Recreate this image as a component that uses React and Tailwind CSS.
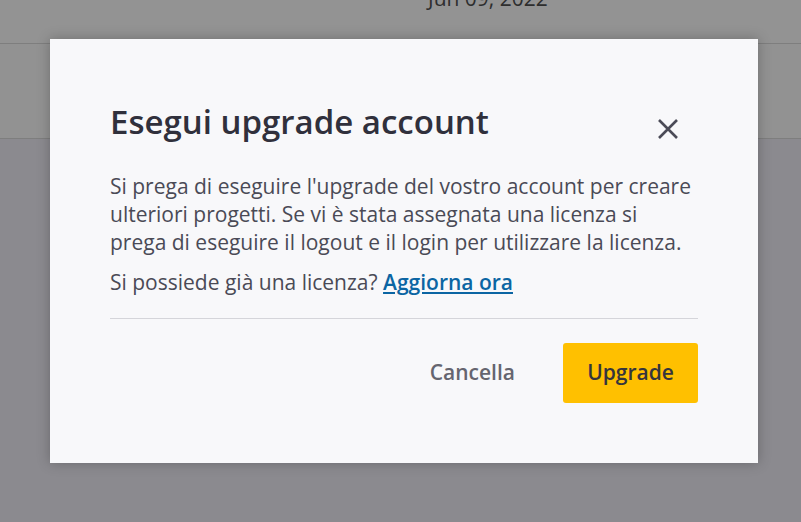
export default function App() {
  return (
    <div
      className="relative h-[522px] w-[801px] overflow-hidden bg-[#8b8a8f]"
      style={{ fontFamily: '"Open Sans", "Noto Sans", sans-serif' }}
    >
      {/* dimmed page behind the dialog */}
      <div className="h-[44px] overflow-hidden border-b border-[#7e7e7e] bg-[#939393]">
        <div className="-mt-[16px] pl-[428px] text-[21px] leading-[28px] text-[#2e2e2e]">Jun 09, 2022</div>
      </div>
      <div className="h-[95px] border-b border-[#7e7e7e] bg-[#929292]" />

      {/* dialog */}
      <div className="absolute left-[50px] top-[39px] flex h-[424px] w-[708px] flex-col bg-[#f8f8fa] px-[60px] pt-[60px] shadow-[0_0_12px_rgba(0,0,0,0.25)]">
        <div className="flex items-start justify-between">
          <h2 className="text-[33px] font-semibold leading-[46px] text-[#30303c]">Esegui upgrade account</h2>
          <button className="mr-[19px] mt-[19px] text-[#4b4b57]">
            <svg width="22" height="22" viewBox="0 0 22 22" fill="none" stroke="currentColor" strokeWidth="2.6">
              <path d="M2 2L20 20M20 2L2 20" />
            </svg>
          </button>
        </div>
        <p className="mt-[27px] text-[21px] leading-[28px] text-[#4a4a56]">
          Si prega di eseguire l'upgrade del vostro account per creare ulteriori progetti. Se vi è stata assegnata una licenza si prega di eseguire il logout e il login per utilizzare la licenza.
        </p>
        <p className="mt-[12px] text-[21px] leading-[28px] text-[#4a4a56]">
          Si possiede già una licenza?{' '}
          <a href="#" className="font-semibold text-[#0b65a3] underline underline-offset-2">Aggiorna ora</a>
        </p>
        <div className="mt-[22px] border-t border-[#d5d5da]" />
        <div className="mt-[24px] flex items-center justify-end gap-[48px]">
          <button className="text-[21px] font-semibold text-[#65656f]">Cancella</button>
          <button className="h-[60px] w-[135px] rounded-[3px] bg-[#ffc000] text-[21px] font-semibold text-[#35353d]">Upgrade</button>
        </div>
      </div>
    </div>
  );
}
